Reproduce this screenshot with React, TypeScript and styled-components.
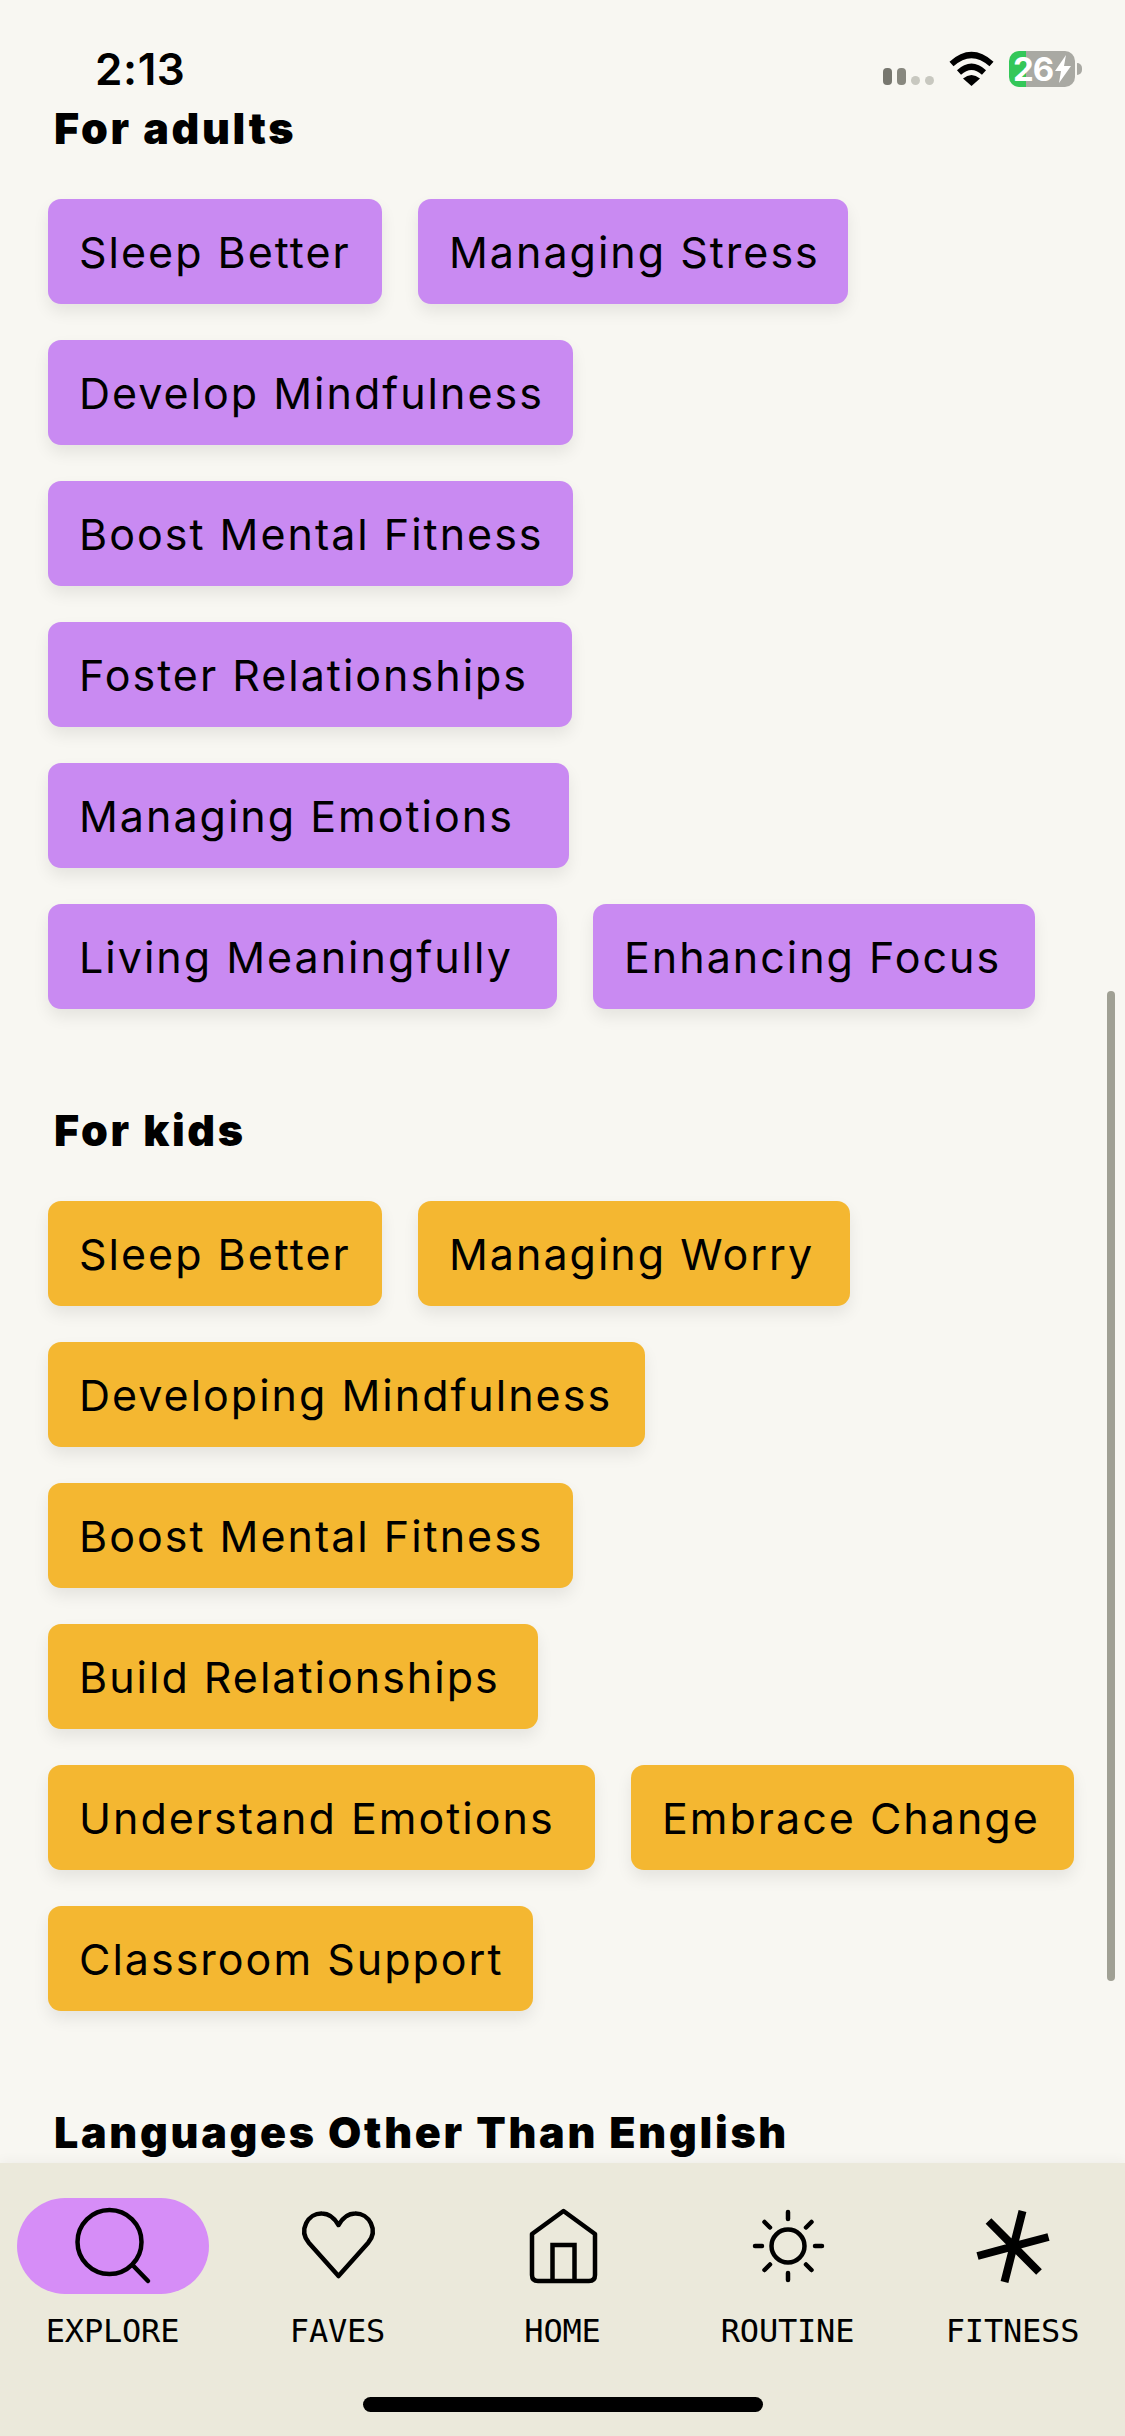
import React, { FC } from "react";
import styled, { createGlobalStyle } from "styled-components";

const GlobalStyle = createGlobalStyle`
  html, body {
    margin: 0;
    padding: 0;
    background: #f8f7f2;
  }
`;

const Screen = styled.div`
  position: relative;
  display: flex;
  flex-direction: column;
  width: 1125px;
  height: 2436px;
  overflow: hidden;
  background: #f8f7f2;
  color: #000;
  font-family: Inter, "Liberation Sans", sans-serif;
`;

const StatusBar = styled.div`
  display: flex;
  flex: none;
  justify-content: space-between;
  align-items: center;
  box-sizing: border-box;
  height: 100px;
  padding: 45px 50px 7px 95px;
`;

const Time = styled.span`
  font-size: 44px;
  font-weight: 600;
  line-height: 48px;
  letter-spacing: 0.6px;
`;

const StatusIcons = styled.div`
  display: flex;
  align-items: center;
  gap: 15px;
`;

const Battery = styled.div`
  position: relative;
  display: flex;
  align-items: center;
  justify-content: center;
  gap: 2px;
  width: 66px;
  height: 36px;
  border-radius: 10px;
  background: linear-gradient(to right, #34c759 17px, #a9a9a3 17px);
  color: #fff;
  font-size: 33px;
  font-weight: 700;
  letter-spacing: -1px;

  &::after {
    content: "";
    position: absolute;
    top: 12px;
    right: -7px;
    width: 5px;
    height: 12px;
    border-radius: 0 6px 6px 0;
    background: #a9a9a3;
  }
`;

const Content = styled.main`
  flex: 1;
  min-height: 0;
  overflow: hidden;
`;

const Section = styled.section`
  margin-bottom: 93px;
`;

const Heading = styled.h2`
  margin: 0 0 44px;
  padding: 1px 0 0 54px;
  font-size: 43px;
  font-weight: 900;
  line-height: 54px;
  letter-spacing: 2.7px;
`;

const ChipList = styled.div`
  display: flex;
  flex-wrap: wrap;
  gap: 36px;
  padding: 0 35px 0 48px;
`;

const Chip = styled.div<{ $color: string; $width: number }>`
  display: flex;
  align-items: center;
  box-sizing: border-box;
  width: ${({ $width }) => $width}px;
  height: 105px;
  padding-left: 31px;
  border-radius: 13px;
  background: ${({ $color }) => $color};
  box-shadow: 0 8px 16px rgba(0, 0, 0, 0.08);
  font-size: 43px;
  font-weight: 400;
  letter-spacing: 2px;
  white-space: nowrap;
`;

const Scrollbar = styled.div`
  position: absolute;
  top: 991px;
  right: 10px;
  width: 8px;
  height: 990px;
  border-radius: 4px;
  background: #a0a094;
`;

const BottomNav = styled.nav`
  position: relative;
  display: flex;
  flex: none;
  flex-direction: column;
  align-items: center;
  box-sizing: border-box;
  height: 273px;
  padding-top: 35px;
  background: #ebe9db;
  box-shadow: 0 -4px 10px rgba(0, 0, 0, 0.03);
`;

const TabRow = styled.div`
  display: grid;
  grid-template-columns: repeat(5, 225px);
`;

const Tab = styled.div`
  display: flex;
  flex-direction: column;
  align-items: center;
`;

const IconSlot = styled.div<{ $active?: boolean }>`
  display: flex;
  justify-content: center;
  width: 192px;
  height: 96px;
  border-radius: 48px;
  background: ${({ $active }) => ($active ? "#d68df7" : "transparent")};
`;

const TabLabel = styled.span`
  margin-top: 17px;
  font-family: "DejaVu Sans Mono", "Liberation Mono", monospace;
  font-size: 32px;
  line-height: 40px;
  letter-spacing: -0.2px;
`;

const HomeIndicator = styled.div`
  width: 400px;
  height: 15px;
  margin-top: 46px;
  border-radius: 8px;
  background: #000;
`;

const CellIcon: FC = () => (
  <svg width="51" height="36" viewBox="0 0 51 36">
    <rect x="0" y="17" width="9" height="17" rx="4" fill="#77776f" />
    <rect x="14" y="17" width="9" height="17" rx="4" fill="#88887f" />
    <rect x="28" y="25" width="9" height="9" rx="4.5" fill="#c8c8c0" />
    <rect x="42" y="25" width="9" height="9" rx="4.5" fill="#c8c8c0" />
  </svg>
);

const WifiIcon: FC = () => (
  <svg width="45" height="36" viewBox="0 0 45 36">
    <path d="M2.5 13 Q22.5 -5 42.5 13" fill="none" stroke="#000" strokeWidth="6" />
    <path d="M10 21.5 Q22.5 10 35 21.5" fill="none" stroke="#000" strokeWidth="6" />
    <path d="M14 27.5 Q22.5 20.5 31 27.5 L22.5 35 Z" fill="#000" />
  </svg>
);

const BoltIcon: FC = () => (
  <svg width="16" height="28" viewBox="0 0 16 28">
    <path d="M11 0 L0 16 H6 L4 28 L16 11 H9 Z" fill="#fff" />
  </svg>
);

const iconProps = {
  width: 96,
  height: 96,
  viewBox: "0 0 96 96",
  fill: "none",
  stroke: "#000",
  strokeWidth: 4.5,
};

const SearchIcon: FC = () => (
  <svg {...iconProps}>
    <circle cx="44.5" cy="44" r="32" />
    <path d="M67.5 67 L83 83" strokeLinecap="round" />
  </svg>
);

const HeartIcon: FC = () => (
  <svg {...iconProps}>
    <path
      d="M48.5 78 L19 45 C8 32 18 15 32 15.5 C40 15.5 45 21 48.5 27 C52 21 57 15.5 65 15.5 C79 15 89 32 78 45 Z"
      strokeLinejoin="round"
    />
  </svg>
);

const HomeIcon: FC = () => (
  <svg {...iconProps}>
    <path
      d="M48.5 13 L80 36 V77 Q80 83 74 83 H23 Q17 83 17 77 V36 Z"
      strokeLinejoin="round"
    />
    <path d="M37.5 83 V47 H59.5 V83" />
  </svg>
);

const SunIcon: FC = () => (
  <svg {...iconProps} strokeLinecap="round">
    <circle cx="48" cy="48" r="16.5" />
    <path d="M48 14 V21 M48 75 V82 M15 48 H22 M75 48 H82 M24.5 24 L30 29.5 M71.5 24 L66 29.5 M24.5 72 L30 66.5 M71.5 72 L66 66.5" />
  </svg>
);

const FitnessIcon: FC = () => (
  <svg {...iconProps} strokeWidth={8}>
    <path d="M57.5 13 L39.5 84 M12.5 58 L83.5 39 M23.5 23 L74 74" />
    <circle cx="48.5" cy="48" r="6" fill="#000" stroke="none" />
  </svg>
);

const ADULT_TOPICS = [
  { label: "Sleep Better", width: 334 },
  { label: "Managing Stress", width: 430 },
  { label: "Develop Mindfulness", width: 525 },
  { label: "Boost Mental Fitness", width: 525 },
  { label: "Foster Relationships", width: 524 },
  { label: "Managing Emotions", width: 521 },
  { label: "Living Meaningfully", width: 509 },
  { label: "Enhancing Focus", width: 442 },
];

const KID_TOPICS = [
  { label: "Sleep Better", width: 334 },
  { label: "Managing Worry", width: 432 },
  { label: "Developing Mindfulness", width: 597 },
  { label: "Boost Mental Fitness", width: 525 },
  { label: "Build Relationships", width: 490 },
  { label: "Understand Emotions", width: 547 },
  { label: "Embrace Change", width: 443 },
  { label: "Classroom Support", width: 485 },
];

const TABS = [
  { label: "EXPLORE", icon: <SearchIcon />, active: true },
  { label: "FAVES", icon: <HeartIcon /> },
  { label: "HOME", icon: <HomeIcon /> },
  { label: "ROUTINE", icon: <SunIcon /> },
  { label: "FITNESS", icon: <FitnessIcon /> },
];

const App: FC = (): JSX.Element => {
  return (
    <>
      <GlobalStyle />
      <Screen>
        <StatusBar>
          <Time>2:13</Time>
          <StatusIcons>
            <CellIcon />
            <WifiIcon />
            <Battery>
              26
              <BoltIcon />
            </Battery>
          </StatusIcons>
        </StatusBar>
        <Content>
          <Section>
            <Heading>For adults</Heading>
            <ChipList>
              {ADULT_TOPICS.map((topic) => (
                <Chip key={topic.label} $color="#c98af2" $width={topic.width}>
                  {topic.label}
                </Chip>
              ))}
            </ChipList>
          </Section>
          <Section>
            <Heading>For kids</Heading>
            <ChipList>
              {KID_TOPICS.map((topic) => (
                <Chip key={topic.label} $color="#f4b731" $width={topic.width}>
                  {topic.label}
                </Chip>
              ))}
            </ChipList>
          </Section>
          <Section>
            <Heading>Languages Other Than English</Heading>
          </Section>
        </Content>
        <Scrollbar />
        <BottomNav>
          <TabRow>
            {TABS.map((tab) => (
              <Tab key={tab.label}>
                <IconSlot $active={tab.active}>{tab.icon}</IconSlot>
                <TabLabel>{tab.label}</TabLabel>
              </Tab>
            ))}
          </TabRow>
          <HomeIndicator />
        </BottomNav>
      </Screen>
    </>
  );
};

export default App;
